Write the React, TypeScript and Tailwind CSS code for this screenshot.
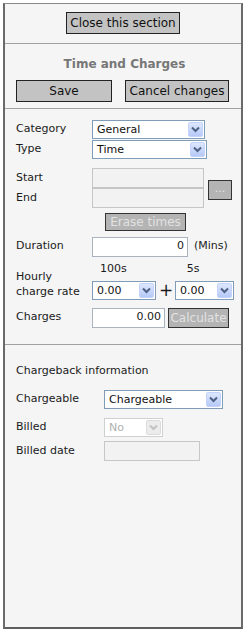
import React from "react";

function Chevron({ disabled }: { disabled?: boolean }) {
  return (
    <div
      className={
        "w-[15px] h-[15px] mr-[1px] rounded-[2px] flex items-center justify-center " +
        (disabled
          ? "bg-[#ececec] border border-[#dcdcdc]"
          : "bg-gradient-to-b from-[#dde7fd] to-[#b6c9f7] border border-[#c3d3fb]")
      }
    >
      <svg width="9" height="7" viewBox="0 0 9 7">
        <path
          d="M1 1.5 L4.5 5 L8 1.5"
          fill="none"
          stroke={disabled ? "#c2c2c2" : "#4d6185"}
          strokeWidth="2"
        />
      </svg>
    </div>
  );
}

function Select({
  value,
  width,
  disabled,
}: {
  value: string;
  width: string;
  disabled?: boolean;
}) {
  return (
    <div
      className={
        "h-[19px] flex items-center justify-between bg-white border " +
        width +
        (disabled ? " border-[#d0d0d0] text-[#b0b0b0]" : " border-[#7f9db9] text-[#111]")
      }
    >
      <span className="pl-[4px] leading-none">{value}</span>
      <Chevron disabled={disabled} />
    </div>
  );
}

function Input({
  value,
  width,
  disabled,
}: {
  value?: string;
  width: string;
  disabled?: boolean;
}) {
  return (
    <div
      className={
        "h-[20px] flex items-center justify-end pr-[3px] " +
        width +
        (disabled
          ? " bg-[#f2f2f2] border border-[#c6c6c6]"
          : " bg-white border border-[#a9b4bf]")
      }
    >
      {value}
    </div>
  );
}

export default function App() {
  return (
    <div className="w-[246px] h-[632px] bg-white pt-[3px] pl-[3px] font-['DejaVu_Sans',sans-serif] text-[11px] text-[#1a1a1a]">
      <div className="w-[240px] h-[626px] bg-[#f5f5f5] border-t border-l-2 border-r-2 border-b-2 border-t-[#8a8a8a] border-x-[#6a6a6a] border-b-[#5e5e5e] flex flex-col">
        {/* close */}
        <div className="h-[40px] pt-[8px] flex justify-center border-b border-[#a0a0a0]">
          <button className="w-[114px] h-[22px] bg-[#c3c3c3] border border-[#222] text-[12px] text-[#111]">
            Close this section
          </button>
        </div>

        {/* title + save */}
        <div className="h-[65px] pt-[12px] pl-[11px] border-b border-[#a0a0a0]">
          <div className="h-[16px] leading-[16px] text-center font-bold text-[12px] text-[#777] pr-[8px]">
            Time and Charges
          </div>
          <div className="mt-[8px] flex gap-[13px]">
            <button className="w-[96px] h-[22px] bg-[#c3c3c3] border border-[#222] text-[12px] text-[#111]">
              Save
            </button>
            <button className="w-[104px] h-[22px] bg-[#c3c3c3] border border-[#222] text-[12px] text-[#111]">
              Cancel changes
            </button>
          </div>
        </div>

        {/* details */}
        <div className="h-[236px] pt-[11px] pl-[11px] border-b border-[#a0a0a0]">
          <div className="flex items-center">
            <span className="w-[76px]">Category</span>
            <Select value="General" width="w-[113px]" />
          </div>
          <div className="flex items-center mt-[1px]">
            <span className="w-[76px]">Type</span>
            <Select value="Time" width="w-[115px]" />
          </div>

          <div className="flex items-center mt-[9px]">
            <div className="flex flex-col">
              <div className="flex items-center">
                <span className="w-[76px]">Start</span>
                <Input width="w-[112px]" disabled />
              </div>
              <div className="flex items-center">
                <span className="w-[76px]">End</span>
                <Input width="w-[112px]" disabled />
              </div>
            </div>
            <button className="ml-[4px] mt-[3px] w-[24px] h-[20px] bg-[#b4b4b4] border border-[#333] text-[#e6e6e6] leading-none pb-[3px]">
              ...
            </button>
          </div>

          <button className="ml-[89px] mt-[5px] w-[81px] h-[18px] bg-[#b4b4b4] border border-[#333] text-[12px] text-[#e2e2e2] leading-none">
            Erase times
          </button>

          <div className="flex items-center mt-[5px]">
            <span className="w-[76px]">Duration</span>
            <Input value="0" width="w-[96px]" />
            <span className="ml-[6px] text-[#222]">(Mins)</span>
          </div>

          <div className="flex items-end mt-[5px]">
            <span className="w-[76px] leading-[15px] pb-[1px]">
              Hourly
              <br />
              charge rate
            </span>
            <div className="flex flex-col">
              <div className="flex h-[14px] leading-[14px]">
                <span className="ml-[8px]">100s</span>
                <span className="ml-[60px]">5s</span>
              </div>
              <div className="flex items-center mt-[5px]">
                <Select value="0.00" width="w-[64px]" />
                <span className="ml-[3px] text-[17px] leading-[18px] w-[16px]">+</span>
                <Select value="0.00" width="w-[59px]" />
              </div>
            </div>
          </div>

          <div className="flex items-center mt-[8px]">
            <span className="w-[76px]">Charges</span>
            <Input value="0.00" width="w-[73px]" />
            <button className="ml-[3px] w-[61px] h-[20px] bg-[#b4b4b4] border border-[#333] text-[12px] text-[#e2e2e2] leading-none">
              Calculate
            </button>
          </div>
        </div>

        {/* chargeback */}
        <div className="pt-[19px] pl-[11px]">
          <div className="h-[14px] leading-[14px]">Chargeback information</div>
          <div className="flex items-center mt-[12px]">
            <span className="w-[88px]">Chargeable</span>
            <Select value="Chargeable" width="w-[119px]" />
          </div>
          <div className="flex items-center mt-[9px]">
            <span className="w-[88px]">Billed</span>
            <Select value="No" width="w-[59px]" disabled />
          </div>
          <div className="flex items-center mt-[4px]">
            <span className="w-[88px]">Billed date</span>
            <Input width="w-[96px]" disabled />
          </div>
        </div>
      </div>
    </div>
  );
}
